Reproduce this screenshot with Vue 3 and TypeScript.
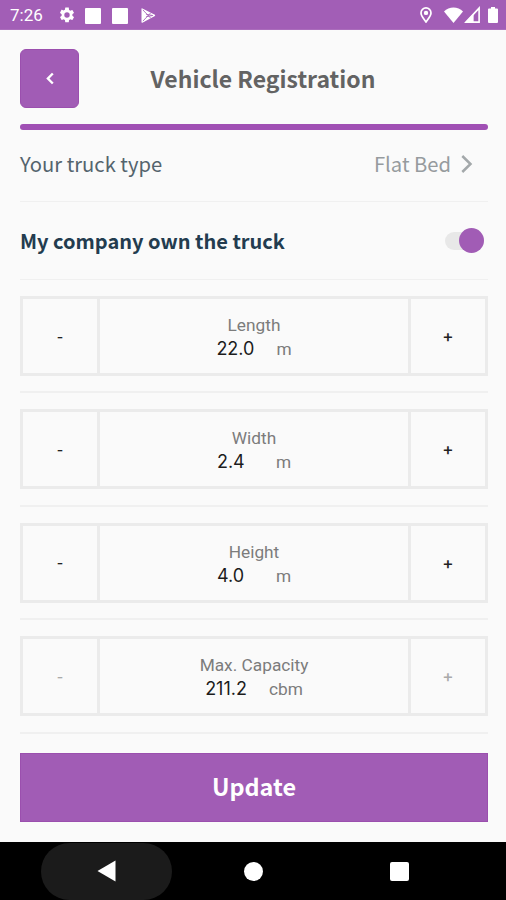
<script setup lang="ts">
import { reactive, ref } from 'vue'

interface Dimension {
  label: string
  value: number
  unit: string
  locked: boolean
}

const dimensions = reactive<Dimension[]>([
  { label: 'Length', value: 22, unit: 'm', locked: false },
  { label: 'Width', value: 2.4, unit: 'm', locked: false },
  { label: 'Height', value: 4, unit: 'm', locked: false },
  { label: 'Max. Capacity', value: 211.2, unit: 'cbm', locked: true },
])
const companyOwned = ref(true)

function step(item: Dimension, delta: number): void {
  item.value = Math.max(0, item.value + delta)
  const [length, width, height, capacity] = dimensions
  capacity.value = length.value * width.value * height.value
}
</script>

<template>
  <div class="screen">
    <div class="status">
      <div class="status-left">
        <span class="clock">7:26</span>
        <svg class="gear" viewBox="0 0 24 24"><path fill="#fff" fill-rule="evenodd" d="M19.14 12.94c.04-.3.06-.61.06-.94s-.02-.64-.07-.94l2.03-1.58a.5.5 0 0 0 .12-.61l-1.92-3.32a.5.5 0 0 0-.59-.22l-2.39.96a7 7 0 0 0-1.62-.94l-.36-2.54A.48.48 0 0 0 13.92 2h-3.84a.48.48 0 0 0-.48.41l-.35 2.54c-.59.24-1.13.57-1.62.94l-2.39-.96a.48.48 0 0 0-.59.22L2.74 8.87a.48.48 0 0 0 .12.61l2.03 1.58a7.1 7.1 0 0 0 0 1.88l-2.03 1.58a.5.5 0 0 0-.12.61l1.92 3.32c.12.22.37.29.59.22l2.39-.96c.5.38 1.03.7 1.62.94l.36 2.54c.05.24.24.41.48.41h3.84c.24 0 .44-.17.47-.41l.36-2.54a6.8 6.8 0 0 0 1.62-.94l2.39.96c.22.08.47 0 .59-.22l1.92-3.32a.48.48 0 0 0-.12-.61zM12 15.6A3.6 3.6 0 1 1 12 8.4a3.6 3.6 0 0 1 0 7.200z" /></svg>
        <i class="block"></i>
        <i class="block second"></i>
        <svg class="play" viewBox="0 0 15 16"><path fill="#fff" d="M0 .7Q.2 0 1 .4L14.300 7.300Q15 8 14.300 8.600L1 15.600Q.2 16 0 15.300z" /><path fill="none" stroke="#a25eb6" stroke-width=".9" d="M1.500 2L10 11M1.500 14L10 5M5 6.700L12 8L5 9.300" /></svg>
      </div>
      <div class="status-right">
        <svg class="pin" viewBox="0 0 12 16"><path fill="none" stroke="#fff" stroke-width="1.700" d="M6 15C3.500 11.500 1 8.700 1 5.900a5 5 0 0 1 10 0C11 8.700 8.500 11.500 6 15z" /><circle cx="6" cy="5.900" r="2.200" fill="#fff" /></svg>
        <svg class="wifi" viewBox="0 0 19 16"><path fill="#fff" d="M0 4.500C5-1 14-1 19 4.500L9.500 16z" /></svg>
        <svg class="signal" viewBox="0 0 15 16"><path fill="none" stroke="#fff" stroke-width="1.500" d="M1.800 15.200L14.200 2V15.200z" /><path fill="#fff" d="M1 15.500L9 7V15.500z" /></svg>
        <svg class="battery" viewBox="0 0 10 16"><path fill="#fff" d="M3 0h4v1.600h2q1 0 1 1V15q0 1-1 1H1q-1 0-1-1V2.600q0-1 1-1h2z" /></svg>
      </div>
    </div>

    <main class="content">
      <header class="header">
        <button class="back" type="button">
          <svg viewBox="0 0 8 12"><path fill="none" stroke="#fff" stroke-width="2.400" d="M6.800 1L1.900 6l4.900 5" /></svg>
        </button>
        <h1 class="title">Vehicle Registration</h1>
      </header>
      <div class="progress"></div>

      <div class="row type-row">
        <span class="type-label">Your truck type</span>
        <span class="type-value">Flat Bed
          <svg viewBox="0 0 12 18"><path fill="none" stroke="#a3a8aa" stroke-width="2.500" d="M1.300 1L9.500 9l-8.200 8" /></svg>
        </span>
      </div>

      <div class="row owner-row">
        <span class="owner-label">My company own the truck</span>
        <button class="toggle" :class="{ off: !companyOwned }" type="button" @click="companyOwned = !companyOwned"><i></i></button>
      </div>

      <section v-for="item in dimensions" :key="item.label" class="dimension">
        <div class="stepper">
          <button class="step minus" type="button" :disabled="item.locked" @click="step(item, -0.1)">-</button>
          <div class="reading">
            <span class="name">{{ item.label }}</span>
            <div class="measure">
              <span class="value">{{ item.value.toFixed(1) }}</span>
              <span class="unit">{{ item.unit }}</span>
            </div>
          </div>
          <button class="step" type="button" :disabled="item.locked" @click="step(item, 0.1)">+</button>
        </div>
      </section>

      <button class="update" type="button">Update</button>
    </main>

    <nav class="navbar">
      <div class="nav-back"><svg viewBox="0 0 19 22"><path fill="#fff" d="M.5 11L18.500.5v21z" /></svg></div>
      <i class="nav-home"></i>
      <i class="nav-recent"></i>
    </nav>
  </div>
</template>

<style>
body {
  margin: 0;
}
</style>

<style scoped>
.screen {
  display: flex;
  flex-direction: column;
  width: 506px;
  height: 900px;
  overflow: hidden;
  background: #fafafa;
  font-family: 'Noto Sans CJK SC', 'Noto Sans', sans-serif;
}
.screen * {
  box-sizing: border-box;
}
button {
  margin: 0;
  padding: 0;
  border: 0;
  background: none;
  font-family: inherit;
}
svg {
  display: block;
  flex: none;
}
.status {
  display: flex;
  flex: none;
  justify-content: space-between;
  height: 30px;
  padding: 0 8px 0 10px;
  background: #a25eb6;
  border-bottom: 1px solid #ab6dbc;
}
.status-left,
.status-right {
  display: flex;
  align-items: center;
}
.clock {
  width: 49px;
  color: #fff;
  font: 17px/30px Roboto, sans-serif;
  padding-top: 1px;
}
.gear {
  width: 18px;
  height: 18px;
  margin: 1px 9px 0 -1px;
}
.block {
  width: 16px;
  height: 16px;
  margin-top: 2px;
  border-radius: 1px;
  background: #fff;
}
.block.second {
  margin-left: 11px;
}
.play {
  width: 15px;
  height: 15px;
  margin: 2px 0 0 13px;
}
.pin {
  width: 12px;
  height: 16px;
  margin: 1px 12px 0 0;
}
.wifi {
  width: 19px;
  height: 16px;
  margin-right: 1px;
}
.signal {
  width: 16px;
  height: 17px;
  margin-right: 8px;
}
.battery {
  width: 10px;
  height: 16px;
  margin-top: 1px;
}
.content {
  display: flex;
  flex: 1;
  flex-direction: column;
  padding: 19px 18px 0 20px;
}
.header {
  display: grid;
  flex: none;
  grid-template-columns: 59px 1fr 41px;
  align-items: center;
  height: 59px;
}
.back {
  display: grid;
  place-items: center;
  height: 59px;
  border: 1px solid #9b4fae;
  border-radius: 6px;
  background: #a15cb5;
}
.back svg {
  width: 8px;
  height: 13px;
}
.title {
  margin: 0 0 2px;
  text-align: center;
  color: #636363;
  font-size: 23px;
  font-weight: 700;
  line-height: 32px;
}
.progress {
  flex: none;
  height: 6px;
  margin-top: 16px;
  border-radius: 3px;
  background: #a050b4;
}
.row {
  display: flex;
  flex: none;
  align-items: center;
  justify-content: space-between;
  border-bottom: 1px solid #f0f0f0;
}
.type-row {
  height: 72px;
  padding-bottom: 3px;
  font-size: 20.200px;
  line-height: 30px;
}
.type-label {
  color: #54646d;
}
.type-value {
  display: flex;
  align-items: center;
  gap: 10px;
  margin-right: 15px;
  color: #969b9e;
}
.type-value svg {
  width: 12px;
  height: 18px;
}
.owner-row {
  height: 78px;
}
.owner-label {
  color: #233c4f;
  font-size: 20px;
  font-weight: 700;
  line-height: 30px;
}
.toggle {
  display: flex;
  align-items: center;
  justify-content: flex-end;
  width: 39px;
  height: 18px;
  margin-right: 4px;
  border-radius: 9px;
  background: #e8e8e8;
}
.toggle.off {
  justify-content: flex-start;
}
.toggle i {
  width: 25px;
  height: 25px;
  border-radius: 50%;
  background: #a15cb5;
}
.dimension {
  flex: none;
  height: 113.400px;
  padding-top: 16px;
  border-bottom: 2px solid #f0f0f0;
}
.stepper {
  display: grid;
  grid-template-columns: 74px 1fr 74px;
  gap: 3px;
  height: 80px;
  border: 3px solid #ebebeb;
  background: #ebebeb;
}
.step,
.reading {
  background: #fafafa;
}
.step {
  color: #222;
  font: 500 17px/30px Inter, sans-serif;
}
.step.minus {
  padding-top: 1px;
  font-size: 14px;
}
.step:disabled {
  color: #aaa;
}
.reading {
  display: flex;
  flex-direction: column;
  align-items: center;
  padding-top: 14px;
  font-family: Roboto, sans-serif;
  font-size: 17.300px;
  line-height: 24px;
}
.name,
.unit {
  color: #7c7c7c;
}
.measure {
  display: flex;
  gap: 22px;
}
.value {
  min-width: 37px;
  color: #1c1c1c;
  font-family: Inter, sans-serif;
  font-size: 18px;
}
.update {
  flex: none;
  height: 69px;
  margin-top: 19.400px;
  padding-bottom: 3px;
  border: 1px solid #9b4fae;
  background: #a15cb5;
  color: #fff;
  font-size: 23.400px;
  font-weight: 700;
  line-height: 36px;
}
.navbar {
  display: grid;
  flex: none;
  grid-template-columns: 131px 1fr 1fr;
  align-items: center;
  height: 58px;
  padding-left: 41px;
  background: #000;
}
.nav-back {
  display: grid;
  place-items: center;
  height: 57px;
  border-radius: 29px;
  background: #1b1b1b;
}
.nav-back svg {
  width: 19px;
  height: 22px;
}
.nav-home,
.nav-recent {
  width: 19px;
  height: 19px;
  background: #fff;
}
.nav-home {
  margin-left: 72px;
  border-radius: 50%;
}
.nav-recent {
  margin-left: 51px;
  border-radius: 2px;
}
</style>
